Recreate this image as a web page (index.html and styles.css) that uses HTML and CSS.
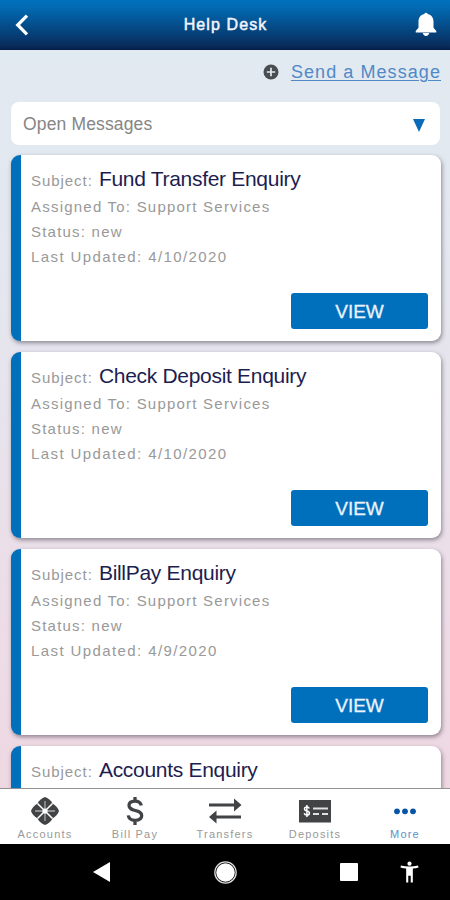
FILE: index.html
```html
<!DOCTYPE html>
<html lang="en">
<head>
<meta charset="utf-8">
<title>Help Desk</title>
<link rel="stylesheet" href="styles.css">
</head>
<body>
<div class="app">
  <header class="topbar">
    <svg class="back" viewBox="0 0 14 22"><path d="M12 1.700 2.700 11 12 20.300" fill="none" stroke="#fff" stroke-width="3.200"/></svg>
    <h1>Help Desk</h1>
    <svg class="bell" viewBox="0 0 22 26"><path fill="#fff" d="M9.300 3a1.800 1.800 0 0 1 3.400 0c3.900 1 5.800 3.800 5.800 7.700v6l2.800 3.200v1.600H.7v-1.600l2.800-3.200v-6C3.500 6.800 5.400 4 9.300 3zM7.800 22h6.400c-.3 1.700-1.500 2.900-3.200 2.900s-2.900-1.200-3.200-2.900z"/></svg>
  </header>
  <main class="content">
    <div class="send">
      <svg class="plus" viewBox="0 0 16 16"><circle cx="8" cy="8" r="7.500" fill="#494c50"/><path d="M8 3.800v8.400M3.800 8h8.400" stroke="#e3e9f0" stroke-width="1.700"/></svg>
      <a class="send-link">Send a Message</a>
    </div>
    <div class="filter"><span>Open Messages</span><i class="caret"></i></div>
    <section class="cards">
      <article class="card">
        <p class="row subject">Subject: <b>Fund Transfer Enquiry</b></p>
        <p class="row">Assigned To: Support Services</p>
        <p class="row">Status: new</p>
        <p class="row date">Last Updated: 4/10/2020</p>
        <div class="view">VIEW</div>
      </article>
      <article class="card">
        <p class="row subject">Subject: <b>Check Deposit Enquiry</b></p>
        <p class="row">Assigned To: Support Services</p>
        <p class="row">Status: new</p>
        <p class="row date">Last Updated: 4/10/2020</p>
        <div class="view">VIEW</div>
      </article>
      <article class="card">
        <p class="row subject">Subject: <b>BillPay Enquiry</b></p>
        <p class="row">Assigned To: Support Services</p>
        <p class="row">Status: new</p>
        <p class="row date">Last Updated: 4/9/2020</p>
        <div class="view">VIEW</div>
      </article>
      <article class="card">
        <p class="row subject">Subject: <b>Accounts Enquiry</b></p>
      </article>
    </section>
  </main>
  <nav class="tabs">
    <div class="tab">
      <svg viewBox="0 0 36 30"><g fill="#414345"><path id="petal" d="M18 15 10.500 7.500C12 4.500 15 2 18 1c3 1 6 3.500 7.500 6.500z"/><use href="#petal" transform="rotate(90 18 15)"/><use href="#petal" transform="rotate(180 18 15)"/><use href="#petal" transform="rotate(270 18 15)"/></g><path d="M18 5v20M8 15h20" stroke="#aaa" stroke-width="1.300"/><path d="m10.500 7.500 15 15M25.500 7.500l-15 15" stroke="#fff" stroke-width="1.500"/><circle cx="18" cy="15" r="2.600" fill="#fff"/></svg>
      <span>Accounts</span>
    </div>
    <div class="tab">
      <svg viewBox="0 0 36 30"><path d="M24.300 9.500C23.600 6.500 21.500 5.200 18 5.200c-3.800 0-6 1.700-6 4.400 0 6.700 12.700 3.100 12.700 10 0 3-2.500 4.800-6.500 4.800-4.200 0-6.500-1.700-6.900-5M18 1v4.500M18 24v5" fill="none" stroke="#414345" stroke-width="3.300"/></svg>
      <span>Bill Pay</span>
    </div>
    <div class="tab">
      <svg viewBox="0 0 36 30"><path d="M2 9h26M8 21h26" stroke="#414345" stroke-width="2.900"/><path fill="#414345" d="m27 2.500 7.500 6.500-7.500 6.500zM9.500 14.500 2 21l7.500 6.500z"/></svg>
      <span>Transfers</span>
    </div>
    <div class="tab">
      <svg viewBox="0 0 36 30"><path fill="#414345" d="M2 4h32v22.500H2z"/><path d="M16 12.500h15M16 18h6M25 18h6" stroke="#e0e0e0" stroke-width="1.800"/><path d="M12.300 12.500c-.5-1.200-1.200-1.600-2.400-1.600-3.200 0-3.200 3.500 0 4 3.400.6 3.200 4.200 0 4.200-1.500 0-2.400-.7-2.700-2M9.900 9v12" fill="none" stroke="#fff" stroke-width="1.500"/></svg>
      <span>Deposits</span>
    </div>
    <div class="tab active">
      <svg viewBox="0 0 36 30"><g fill="#0754a5"><circle cx="10" cy="15.300" r="2.900"/><circle cx="18" cy="15.300" r="2.900"/><circle cx="26" cy="15.300" r="2.900"/></g></svg>
      <span>More</span>
    </div>
  </nav>
  <footer class="system">
    <svg class="sys-back" viewBox="0 0 17 20"><path d="M17 0v20L0 10z" fill="#fff"/></svg>
    <svg class="sys-home" viewBox="0 0 22 22"><circle cx="11" cy="11" r="10.200" fill="none" stroke="#ddd" stroke-width="1.200"/><circle cx="11" cy="11" r="8.900" fill="#fff"/></svg>
    <i class="sys-recent"></i>
    <svg class="sys-access" viewBox="0 0 20 22"><circle cx="10" cy="2.200" r="2.200" fill="#fff"/><path fill="#fff" d="M1 4.200c6 1.300 12 1.300 18 0l.5 2c-1.900.5-3.900.9-6 1.100V22h-2.200v-7H8.700v7H6.500V7.300C4.400 7.100 2.400 6.700.5 6.200z"/></svg>
  </footer>
</div>
</body>
</html>
```
FILE: styles.css
```css
* { box-sizing: border-box; }
body { margin: 0; font-family: "Liberation Sans", sans-serif; }
.app { width: 450px; height: 900px; display: flex; flex-direction: column; overflow: hidden; }
.topbar {
  flex: none; height: 50px; padding: 0 13px 0 15px;
  display: flex; align-items: center; justify-content: space-between;
  background: linear-gradient(#0071bd 0%, #026ab2 15%, #073a70 75%, #082a58 94%, #041b48 100%);
}
.topbar h1 { margin: 0; padding-left: 7px; color: #f1f5ff; font-size: 16px; font-weight: 400; letter-spacing: 1.100px; -webkit-text-stroke: .5px #f1f5ff; }
.back { width: 14px; height: 22px; }
.bell { width: 22px; height: 26px; margin-bottom: 2px; }
.content { flex: 1; min-height: 0; overflow: hidden; padding: 0 9px 0 11px; background: linear-gradient(#e1e9f1 0%, #e3e8f0 22%, #e7e3ec 50%, #eddce7 78%, #eed8e2 100%); }
.send { height: 52px; display: flex; align-items: center; justify-content: flex-end; padding: 0 0 8px 0; }
.plus { width: 16px; height: 16px; margin-right: 12px; }
.send-link { color: #5089c6; font-size: 18px; letter-spacing: 1.070px; line-height: 22px; text-decoration: underline; text-decoration-thickness: 1px; text-underline-offset: 2px; }
.filter { height: 43px; margin-right: 1px; padding: 0 15px 0 12px; border-radius: 8px; background: #fff; display: flex; align-items: center; justify-content: space-between; color: #858585; font-size: 17.500px; letter-spacing: .15px; }
.filter span { padding-top: 1px; }
.caret { border: 6.500px solid transparent; border-top: 13px solid #0a6bb9; border-bottom: 0; margin-top: 3px; }
.cards { display: flex; flex-direction: column; gap: 11px; padding-top: 10px; }
.card {
  flex: none; height: 186px; padding: 11px 13px 12px 10px;
  border-left: 10px solid #0070bc; border-radius: 9px;
  background: #fff; box-shadow: 1px 2px 4px rgba(50, 45, 60, .5);
  display: flex; flex-direction: column;
}
.row { margin: 0; height: 25.200px; line-height: 25px; color: #999; font-size: 15px; letter-spacing: 1.220px; white-space: nowrap; }
.date { letter-spacing: 1.400px; }
.subject { height: 28px; letter-spacing: .95px; }
.subject b { margin-left: 1px; color: #1d1d50; font-size: 21px; font-weight: 400; letter-spacing: -.3px; }
.view { margin-top: auto; align-self: flex-end; width: 137px; height: 36px; line-height: 37px; border-radius: 3px; background: #0070bc; color: #eaf2fc; font-size: 19px; text-align: center; -webkit-text-stroke: .3px #eaf2fc; }
.tabs { flex: none; height: 56px; display: flex; background: #fff; border-top: 1px solid #929292; }
.tab { flex: 1; display: flex; flex-direction: column; align-items: center; padding-top: 7px; color: #999; font-size: 11px; letter-spacing: 1.200px; line-height: 13px; }
.tab svg { width: 36px; height: 30px; margin-bottom: 2px; }
.tab.active { color: #5c91c9; }
.system { flex: none; height: 56px; padding-left: 93px; background: #000; display: flex; align-items: center; }
.sys-back { width: 17px; height: 20px; margin-right: 104px; }
.sys-home { width: 23px; height: 23px; margin-right: 103px; }
.sys-recent { width: 18px; height: 18px; border-radius: 1px; background: #fff; margin-right: 42px; }
.sys-access { width: 19px; height: 22px; }
```
